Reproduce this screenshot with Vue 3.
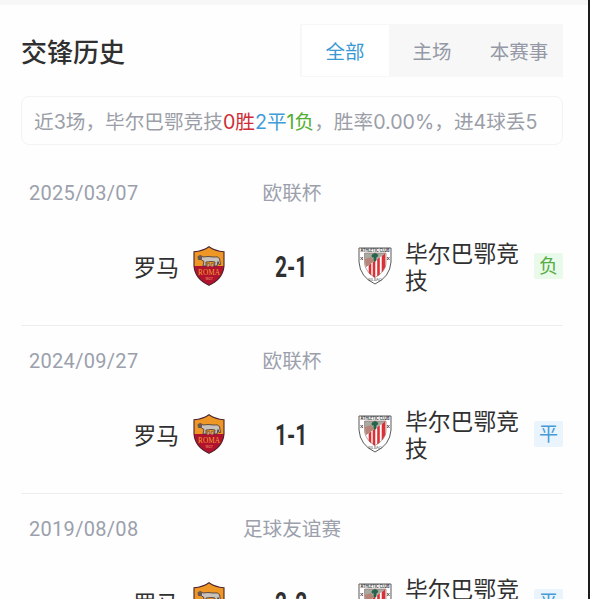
<script setup>
import {ref} from "vue";

const tabs = ['全部', '主场', '本赛事']
const activeTab = ref('全部')

const matches = [
  {date: '2025/03/07', event: '欧联杯', home: '罗马', away: '毕尔巴鄂竞技', score: '2-1', result: '负'},
  {date: '2024/09/27', event: '欧联杯', home: '罗马', away: '毕尔巴鄂竞技', score: '1-1', result: '平'},
  {date: '2019/08/08', event: '足球友谊赛', home: '罗马', away: '毕尔巴鄂竞技', score: '2-2', result: '平'}
]

function resultClass(result) {
  if (result === '负') {
    return 'lose'
  } else if (result === '平') {
    return 'draw'
  } else {
    return 'win'
  }
}
</script>

<template>
<div class="page">
  <div class="header">
    <h2 class="title">交锋历史</h2>
    <div class="tabs">
      <button
        v-for="tab in tabs"
        :key="tab"
        class="tab"
        :class="{active: tab === activeTab}"
        @click="activeTab = tab">{{tab}}</button>
    </div>
  </div>
  <div class="summary">
    <span>近3场，毕尔巴鄂竞技</span><span class="winText">0胜</span><span class="drawText">2平</span><span class="loseText">1负</span><span>，胜率0.00%，进4球丢5</span>
  </div>
  <div class="match" v-for="match in matches" :key="match.date">
    <div class="meta">
      <div class="date">{{match.date}}</div>
      <div class="event">{{match.event}}</div>
    </div>
    <div class="teams">
      <div class="home">{{match.home}}</div>
      <svg class="roma" viewBox="0 0 32 40">
        <path d="M16 .7Q22 5 31 5.8V20Q30 33 16 39.3Q2 33 1 20V5.8Q10 5 16 .7Z" fill="#ee9626"/>
        <path d="M1 20H31Q30 33 16 39.3Q2 33 1 20Z" fill="#b3122f"/>
        <path d="M16 .7Q22 5 31 5.8V20Q30 33 16 39.3Q2 33 1 20V5.8Q10 5 16 .7Z" fill="none" stroke="#4b2229" stroke-width="1.1"/>
        <path d="M5 10.500L7.500 9.500L10 11Q15 10 20 11Q25 10 26.500 12.500L27.500 18.500L26 18.500L25 15.500L24 20H21.500L22 16L19 15.500L13 16L13 20H10L11 15.500L8 13.500L5.500 13.500Z" fill="#c9c1bb" stroke="#3c3434" stroke-width=".8"/>
        <path d="M5 10H9V13.500H5.500Z" fill="#6b5654"/>
        <path d="M14 20.500L14.500 17.500H16.500L16 20.500M18 20.500L18.500 17.500H20.500L20 20.500" fill="#d4b09a" stroke="#65473d" stroke-width=".6"/>
        <text x="16" y="28.500" text-anchor="middle" textLength="22" lengthAdjust="spacingAndGlyphs" class="romaText">ROMA</text>
        <text x="16" y="33.500" text-anchor="middle" class="romaYear">1927</text>
      </svg>
      <div class="score"><span>{{match.score}}</span></div>
      <svg class="athletic" viewBox="0 0 34 38">
        <path d="M1 1H33V15Q32 30 17 37Q2 30 1 15Z" fill="#fff" stroke="#59595c" stroke-width="1"/>
        <path d="M11 18V26L13 28V16.500ZM15 15V29.500L17 30.500V13.500ZM19.500 12V29L21.500 27.500V10.500ZM24 9V25L27 20V6Z" fill="#dc3037" stroke="#dc3037" stroke-width=".6"/>
        <path d="M6.500 6H28L8 20Q6.500 16 6.500 6Z" fill="#a5aaa2"/>
        <path d="M7 12L13 10L16 14L8 20Z" fill="#b98478"/>
        <path d="M14 8L17 6L20 8L19 10H18V14H16V10H14Z" fill="#27644a" stroke="#27644a" stroke-width=".7"/>
        <path d="M2.500 10L5 13M5 10L2.500 13M29 10L31.500 13M31.500 10L29 13" stroke="#5d4a49" stroke-width=".9"/>
        <path d="M6.500 6H28V17Q27 25 17 30.500Q8 25 6.500 17Z" fill="none" stroke="#8d6866" stroke-width=".6"/>
        <text x="17" y="5" text-anchor="middle" textLength="29" lengthAdjust="spacingAndGlyphs" class="clubText">ATHLETIC CLUB</text>
        <text x="17" y="34" text-anchor="middle" class="bilbaoText">BILBAO</text>
      </svg>
      <div class="away">{{match.away}}</div>
      <div class="result" :class="resultClass(match.result)">{{match.result}}</div>
    </div>
  </div>
</div>
</template>

<style>
body {
  margin: 0;
  overflow: hidden;
}
</style>

<style scoped>
* {
  box-sizing: border-box;
}

.page {
  width: 590px;
  height: 599px;
  padding: 24px 25px 0 21px;
  overflow: hidden;
  font-family: Inter, "Noto Sans CJK SC", sans-serif;
  color: #303030;
  background-color: #fefefe;
  border-right: #1c1c1e solid 2px;
  box-shadow: inset 0 5px #f7f7f7;
}

.header {
  display: flex;
  justify-content: space-between;
  height: 53px;
}

.title {
  margin: 0;
  font-size: 26px;
  font-weight: 500;
  line-height: 57px;
}

.tabs {
  display: flex;
  width: 263px;
  padding: 1px 0 1px 2px;
  background-color: #f7f7f7;
}

.tab {
  width: 87px;
  padding: 0 1px 0 0;
  border-width: 0;
  font-family: inherit;
  font-size: 19.5px;
  color: #9599a6;
  background-color: transparent;
}

.tab.active {
  color: #3a98d2;
  background-color: #fff;
}

.summary {
  height: 49px;
  margin-top: 19px;
  padding-left: 12px;
  border: #f3f3f4 solid 1px;
  border-radius: 8px;
  font-size: 19.65px;
  line-height: 50px;
  white-space: nowrap;
  color: #9b9ea8;
}

.winText {
  color: #cf2d36;
}

.drawText {
  color: #3f9bd8;
}

.loseText {
  color: #53ae35;
}

.match {
  height: 168px;
  border-bottom: #ededee solid 1px;
}

.summary + .match {
  margin-top: 13px;
}

.meta {
  display: grid;
  grid-template-columns: 92px 1fr 92px;
  height: 70px;
  font-size: 19.6px;
  line-height: 70px;
  white-space: nowrap;
  color: #9ba0ac;
}

.date {
  padding-left: 8px;
  font-family: Roboto, sans-serif;
  font-size: 20px;
  letter-spacing: 0.3px;
}

.event {
  text-align: center;
}

.teams {
  display: flex;
  align-items: center;
  height: 76px;
}

.home {
  width: 158px;
  text-align: right;
  font-size: 22.8px;
}

.roma {
  width: 32px;
  height: 40px;
  margin-left: 14px;
}

.romaText {
  font-family: "Liberation Serif", serif;
  font-size: 8.5px;
  fill: #f0a02b;
}

.romaYear {
  font-size: 3.5px;
  fill: #eda75c;
}

.score {
  display: flex;
  justify-content: center;
  width: 133px;
  font-family: Roboto, sans-serif;
  font-size: 30px;
  font-weight: 700;
}

.score span {
  transform: scaleX(0.7);
}

.athletic {
  width: 34px;
  height: 38px;
  margin-bottom: 1px;
}

.clubText {
  font-size: 4.5px;
  font-weight: 700;
  fill: #33363a;
}

.bilbaoText {
  font-size: 3.8px;
  fill: #514e50;
}

.away {
  width: 116px;
  margin-left: 13px;
  padding-top: 2px;
  font-size: 22.8px;
  line-height: 27px;
}

.result {
  width: 29px;
  height: 26px;
  margin-left: auto;
  border-radius: 2px;
  font-size: 19px;
  line-height: 27px;
  text-align: center;
}

.lose {
  color: #56ad45;
  background-color: #eafaea;
}

.draw {
  color: #459bd8;
  background-color: #eaf4fd;
}

.win {
  color: #cf2d36;
  background-color: #fdecec;
}
</style>
